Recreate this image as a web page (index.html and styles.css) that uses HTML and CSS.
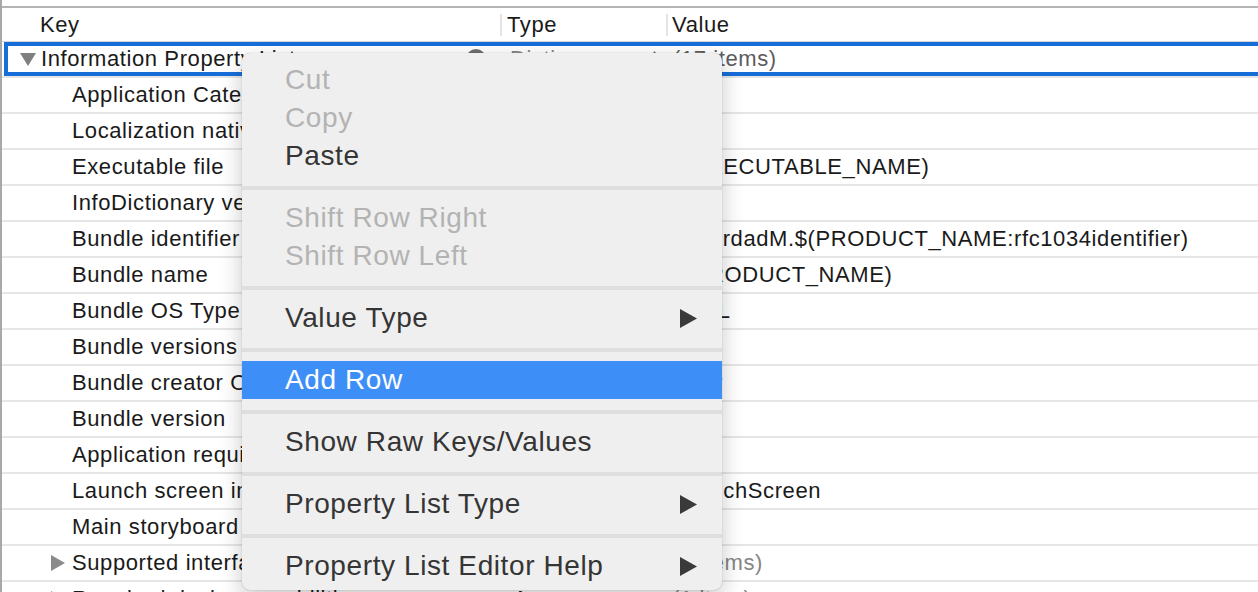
FILE: index.html
```html
<!DOCTYPE html>
<html>
<head>
<meta charset="utf-8">
<link rel="stylesheet" href="styles.css">
</head>
<body>
<div class="outline">
  <div class="header">
    <div class="cell key">Key</div>
    <div class="cell type">Type</div>
    <div class="cell value">Value</div>
  </div>

  <div class="row selected">
    <div class="cell key">
      <svg class="tri-down" width="16" height="13" viewBox="0 0 16 13"><path d="M0 0H16L8 13Z" fill="#7f7f7f"/></svg>
      <span>Information Property List</span>
      <span class="addbtn"></span>
    </div>
    <div class="cell type">
      <span class="muted">Dictionary</span>
      <svg class="stepper" width="9" height="16" viewBox="0 0 9 16"><path d="M4.5 0L9 6H0Z M4.5 16L9 10H0Z" fill="#777"/></svg>
    </div>
    <div class="cell value muted-dark">(17 items)</div>
  </div>

  <div class="row"><div class="cell key">Application Category</div><div class="cell type">String</div><div class="cell value"></div></div>
  <div class="row"><div class="cell key">Localization native development region</div><div class="cell type">String</div><div class="cell value">en</div></div>
  <div class="row"><div class="cell key">Executable file</div><div class="cell type">String</div><div class="cell value">$(EXECUTABLE_NAME)</div></div>
  <div class="row"><div class="cell key">InfoDictionary version</div><div class="cell type">String</div><div class="cell value">6.0</div></div>
  <div class="row"><div class="cell key">Bundle identifier</div><div class="cell type">String</div><div class="cell value">ir.mordadM.$(PRODUCT_NAME:rfc1034identifier)</div></div>
  <div class="row"><div class="cell key">Bundle name</div><div class="cell type">String</div><div class="cell value">$(PRODUCT_NAME)</div></div>
  <div class="row"><div class="cell key">Bundle OS Type code</div><div class="cell type">String</div><div class="cell value">APPL</div></div>
  <div class="row"><div class="cell key">Bundle versions string, short</div><div class="cell type">String</div><div class="cell value">1.0</div></div>
  <div class="row"><div class="cell key">Bundle creator OS Type code</div><div class="cell type">String</div><div class="cell value">????</div></div>
  <div class="row"><div class="cell key">Bundle version</div><div class="cell type">String</div><div class="cell value">1</div></div>
  <div class="row"><div class="cell key">Application requires iPhone environment</div><div class="cell type">Boolean</div><div class="cell value">YES</div></div>
  <div class="row"><div class="cell key">Launch screen interface file base name</div><div class="cell type">String</div><div class="cell value">LaunchScreen</div></div>
  <div class="row"><div class="cell key">Main storyboard file base name</div><div class="cell type">String</div><div class="cell value">Main</div></div>
  <div class="row"><div class="cell key has-tri"><svg width="14" height="16" viewBox="0 0 14 16"><path d="M0 0L14 8L0 16Z" fill="#8a8a8a"/></svg><span>Supported interface orientations</span></div><div class="cell type">Array</div><div class="cell value muted">(3 items)</div></div>
  <div class="row"><div class="cell key has-tri"><svg width="14" height="16" viewBox="0 0 14 16"><path d="M0 0L14 8L0 16Z" fill="#8a8a8a"/></svg><span>Required device capabilities</span></div><div class="cell type">Array</div><div class="cell value muted">(1 item)</div></div>
</div>

<div class="menu">
  <div class="mi disabled">Cut</div>
  <div class="mi disabled">Copy</div>
  <div class="mi">Paste</div>
  <div class="sep"></div>
  <div class="mi disabled">Shift Row Right</div>
  <div class="mi disabled">Shift Row Left</div>
  <div class="sep"></div>
  <div class="mi">Value Type<svg class="arrow" width="17" height="19" viewBox="0 0 17 19"><path d="M0 0L17 9.5L0 19Z" fill="#3a3a3a"/></svg></div>
  <div class="sep"></div>
  <div class="mi hl">Add Row</div>
  <div class="sep"></div>
  <div class="mi">Show Raw Keys/Values</div>
  <div class="sep"></div>
  <div class="mi">Property List Type<svg class="arrow" width="17" height="19" viewBox="0 0 17 19"><path d="M0 0L17 9.5L0 19Z" fill="#3a3a3a"/></svg></div>
  <div class="sep"></div>
  <div class="mi">Property List Editor Help<svg class="arrow" width="17" height="19" viewBox="0 0 17 19"><path d="M0 0L17 9.5L0 19Z" fill="#3a3a3a"/></svg></div>
</div>
</body>
</html>
```

FILE: styles.css
```css
html, body {
  margin: 0;
  height: 100%;
  overflow: hidden;
  background: #ffffff;
}

body {
  font-family: "Liberation Sans", Arial, sans-serif;
  font-size: 22px;
  color: #1a1a1a;
  letter-spacing: 0.6px;
  position: relative;
}

.outline {
  border-left: 2px solid #a8a8a8;
  height: 592px;
  box-sizing: border-box;
  padding-top: 6px;
}

.header {
  border-top: 2px solid #b5b5b5;
  border-bottom: 1px solid #d6d6d6;
  height: 33px;
  display: grid;
  grid-template-columns: 498px 166px 1fr;
  align-items: center;
}

.header .cell {
  height: 22px;
  line-height: 22px;
}

.header .key { padding-left: 38px; }
.header .type { border-left: 2px solid #e4e4e4; padding-left: 5px; }
.header .value { border-left: 2px solid #e4e4e4; padding-left: 4px; }

.row {
  display: grid;
  grid-template-columns: 498px 166px 1fr;
  height: 34px;
  border-top: 2px solid #e6e6e6;
  align-items: center;
  white-space: nowrap;
}

.row .cell { overflow: hidden; }
.row .key { padding-left: 70px; }
.row .key.has-tri {
  padding-left: 49px;
  display: flex;
  align-items: center;
  gap: 7px;
}
.row .type { padding-left: 13px; }
.row .value { padding-left: 6px; }

.row.selected {
  border: 4px solid #176ed9;
  border-right: 0;
  margin-left: 2px;
  height: 26px;
  grid-template-columns: 493px 166px 1fr;
}

.row.selected .key {
  padding-left: 12px;
  display: flex;
  align-items: center;
  gap: 5px;
}

.row.selected .type {
  display: flex;
  align-items: center;
  padding-left: 9px;
}

.addbtn {
  width: 20px;
  height: 20px;
  border-radius: 50%;
  background: #6f6f6f;
  margin-left: auto;
  margin-right: 15px;
  flex: none;
}

.stepper {
  margin-left: auto;
  margin-right: 8px;
}

.muted { color: #858585; }
.muted-dark { color: #5c5c5c; }

.menu {
  position: absolute;
  left: 242px;
  top: 53px;
  width: 480px;
  height: 537px;
  box-sizing: border-box;
  padding-top: 8px;
  background: #efefef;
  border-radius: 8px;
  box-shadow: 0 8px 22px rgba(0, 0, 0, 0.22), 0 0 1px rgba(0, 0, 0, 0.35);
  font-size: 28px;
  letter-spacing: 0.6px;
  color: #353535;
  overflow: hidden;
}

.mi {
  height: 38px;
  display: flex;
  align-items: center;
  padding-left: 43px;
  padding-right: 25px;
  white-space: nowrap;
}

.mi.disabled { color: #b3b3b3; }

.mi.hl {
  background: #3d8ef6;
  color: #ffffff;
}

.mi .arrow { margin-left: auto; }

.sep {
  height: 4px;
  background: #dedede;
  margin: 11px 0 9px;
}
```
